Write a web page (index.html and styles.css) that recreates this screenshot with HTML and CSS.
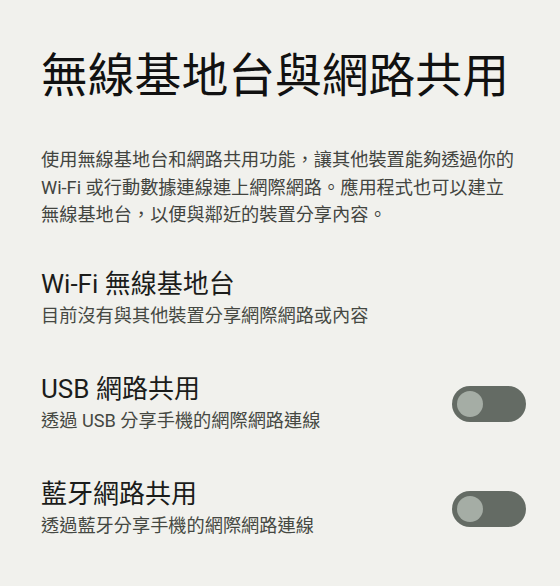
FILE: index.html
```html
<!DOCTYPE html>
<html lang="zh-Hant">
<head>
<meta charset="utf-8">
<link rel="stylesheet" href="styles.css">
</head>
<body>
<main class="page">
  <h1 class="title">無線基地台與網路共用</h1>
  <p class="desc">使用無線基地台和網路共用功能，讓其他裝置能夠透過你的 Wi-Fi 或行動數據連線連上網際網路。應用程式也可以建立無線基地台，以便與鄰近的裝置分享內容。</p>
  <div class="list">
    <div class="item">
      <div class="text">
        <div class="item-title">Wi-Fi 無線基地台</div>
        <div class="item-sub">目前沒有與其他裝置分享網際網路或內容</div>
      </div>
    </div>
    <div class="item">
      <div class="text">
        <div class="item-title">USB 網路共用</div>
        <div class="item-sub">透過 USB 分享手機的網際網路連線</div>
      </div>
      <div class="switch"><span class="knob"></span></div>
    </div>
    <div class="item">
      <div class="text">
        <div class="item-title">藍牙網路共用</div>
        <div class="item-sub">透過藍牙分享手機的網際網路連線</div>
      </div>
      <div class="switch"><span class="knob"></span></div>
    </div>
  </div>
</main>
</body>
</html>
```
FILE: styles.css
```css
html, body {
  margin: 0;
  padding: 0;
  background: #f1f1ed;
}
body {
  font-family: Roboto, "Noto Sans CJK TC", sans-serif;
  color: #1b1c1a;
}
.page {
  padding: 41px 34px 0 41px;
}
.title {
  margin: 0;
  font-size: 46.8px;
  font-weight: 400;
  line-height: 70px;
  color: #111;
  letter-spacing: 0;
}
.desc {
  margin: 35px 6px 0 0;
  font-size: 18.2px;
  line-height: 27.5px;
  color: #42443f;
}
.list {
  display: flex;
  flex-direction: column;
  margin-top: 38px;
  gap: 41px;
}
.item {
  display: flex;
  align-items: center;
  justify-content: space-between;
  min-height: 64px;
}
.item-title {
  font-size: 26px;
  line-height: 34px;
  color: #1b1c1a;
}
.item-sub {
  font-size: 18.2px;
  line-height: 30px;
  color: #454842;
}
.switch {
  width: 74px;
  height: 36px;
  border-radius: 18px;
  background: #646b64;
  display: flex;
  align-items: center;
  padding-left: 5px;
  box-sizing: border-box;
}
.knob {
  width: 26px;
  height: 26px;
  border-radius: 50%;
  background: #a5ada5;
}
```
